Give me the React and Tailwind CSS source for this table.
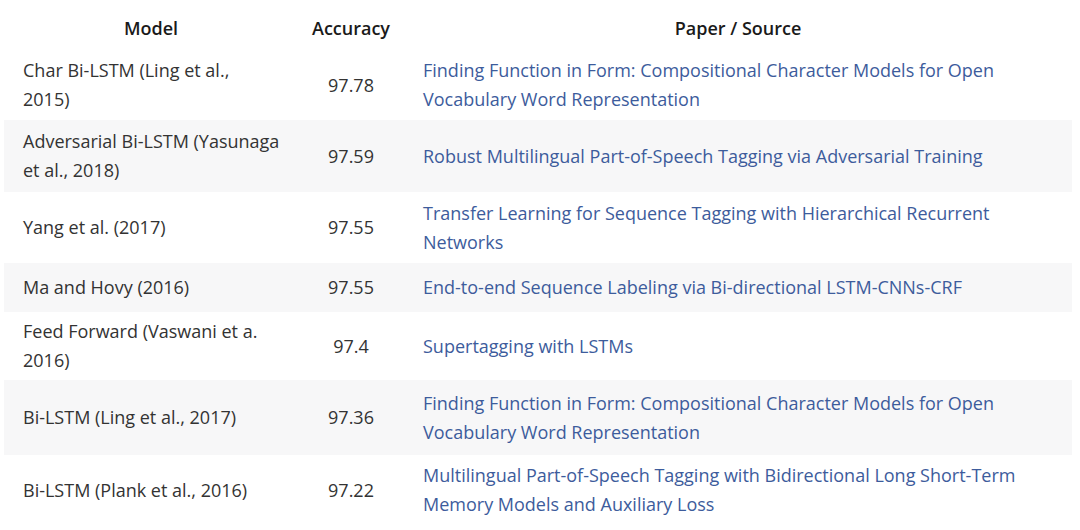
import React from "react";

const rows = [
  {
    model: ["Char Bi-LSTM (Ling et al.,", "2015)"],
    acc: "97.78",
    paper: "Finding Function in Form: Compositional Character Models for Open Vocabulary Word Representation",
    h: "h-[70px]",
  },
  {
    model: ["Adversarial Bi-LSTM (Yasunaga", "et al., 2018)"],
    acc: "97.59",
    paper: "Robust Multilingual Part-of-Speech Tagging via Adversarial Training",
    h: "h-[72px]",
  },
  {
    model: ["Yang et al. (2017)"],
    acc: "97.55",
    paper: "Transfer Learning for Sequence Tagging with Hierarchical Recurrent Networks",
    h: "h-[71px]",
  },
  {
    model: ["Ma and Hovy (2016)"],
    acc: "97.55",
    paper: "End-to-end Sequence Labeling via Bi-directional LSTM-CNNs-CRF",
    h: "h-[49px]",
  },
  {
    model: ["Feed Forward (Vaswani et a.", "2016)"],
    acc: "97.4",
    paper: "Supertagging with LSTMs",
    h: "h-[68px]",
  },
  {
    model: ["Bi-LSTM (Ling et al., 2017)"],
    acc: "97.36",
    paper: "Finding Function in Form: Compositional Character Models for Open Vocabulary Word Representation",
    h: "h-[75px]",
  },
  {
    model: ["Bi-LSTM (Plank et al., 2016)"],
    acc: "97.22",
    paper: "Multilingual Part-of-Speech Tagging with Bidirectional Long Short-Term Memory Models and Auxiliary Loss",
    h: "h-[70px]",
  },
];

function App() {
  return (
    <div className="w-[1080px] h-[530px] overflow-hidden bg-white font-['Open_Sans',sans-serif] text-[18px] leading-[29px] text-[#333]">
      <table className="ml-[4px] w-[1068px] table-fixed border-collapse">
        <colgroup>
          <col className="w-[294px]" />
          <col className="w-[106px]" />
          <col />
        </colgroup>
        <thead>
          <tr className="h-[50px] text-[#1a1a1a]">
            <th className="px-[18px] pt-[7px] text-center font-semibold">Model</th>
            <th className="px-0 pt-[7px] text-center font-semibold">Accuracy</th>
            <th className="px-[18px] pt-[7px] text-center font-semibold">Paper / Source</th>
          </tr>
        </thead>
        <tbody>
          {rows.map((r, i) => (
            <tr key={i} className={`${r.h} ${i % 2 === 1 ? "bg-[#f7f7f8]" : "bg-white"}`}>
              <td className="pl-[19px] pr-[6px] align-middle text-left whitespace-nowrap">
                {r.model.map((line, j) => (
                  <div key={j}>{line}</div>
                ))}
              </td>
              <td className="px-0 align-middle text-center">{r.acc}</td>
              <td className="pl-[19px] pr-[18px] align-middle text-left">
                <a href="#" className="text-[#3d5c9c]">{r.paper}</a>
              </td>
            </tr>
          ))}
        </tbody>
      </table>
    </div>
  );
}

export default App;
